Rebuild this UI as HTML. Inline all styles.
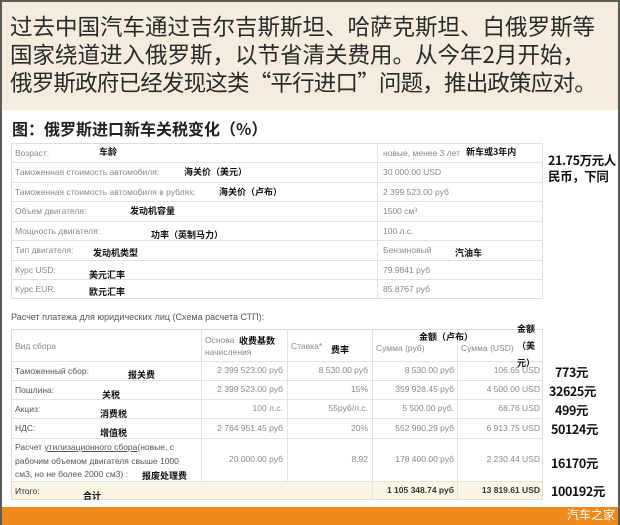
<!DOCTYPE html>
<html><head><meta charset="utf-8"><style>
*{margin:0;padding:0;box-sizing:border-box}
body{width:620px;height:525px;overflow:hidden;background:#fff;font-family:"Liberation Sans","Noto Sans CJK SC",sans-serif;position:relative}
.frame{position:absolute;left:0;top:0;width:620px;height:525px;border:2px solid #5a5a5a;border-bottom:none;pointer-events:none;z-index:5}
.top{position:absolute;left:0;top:0;width:620px;height:110px;background:#f3ecdf}
.top p{position:absolute;left:10px;font-size:22.5px;color:#2a2a2a;letter-spacing:0;white-space:nowrap;font-family:"Noto Sans CJK SC",sans-serif;line-height:28px}
.title{position:absolute;left:12px;top:116px;font-size:16px;font-weight:bold;color:#222;font-family:"Noto Sans CJK SC",sans-serif}
.a{position:absolute;font-size:8.5px;color:#888;white-space:nowrap}
.b{position:absolute;font-size:9px;font-weight:bold;color:#111;white-space:nowrap;font-family:"Noto Sans CJK SC",sans-serif;line-height:12px}
.r{position:absolute;font-size:12.5px;letter-spacing:-0.4px;font-weight:bold;color:#111;white-space:nowrap;font-family:"Noto Sans CJK SC",sans-serif;line-height:16px}
.vl{position:absolute;width:1px;background:#e2e2e2}
.hl{position:absolute;height:1px;background:#e2e2e2}
.bar{position:absolute;left:0;top:507px;width:620px;height:18px;background:#f08a1e}
.num{position:absolute;text-align:right;font-size:8.5px;color:#888;line-height:19.2px;white-space:nowrap}
</style></head><body>
<div class="top">
<p style="top:12px">过去中国汽车通过吉尔吉斯斯坦、哈萨克斯坦、白俄罗斯等</p>
<p style="top:40px">国家绕道进入俄罗斯，以节省清关费用。从今年2月开始，</p>
<p style="top:68px;letter-spacing:-0.8px">俄罗斯政府已经发现这类“平行进口”问题，推出政策应对。</p>
</div>
<div class="title">图：俄罗斯进口新车关税变化（%）</div>

<div style="position:absolute;left:11px;top:143px;width:532px;height:156px;border:1px solid #ddd"></div>
<div class="hl" style="left:11px;width:532px;top:162px"></div><div class="hl" style="left:11px;width:532px;top:182px"></div><div class="hl" style="left:11px;width:532px;top:201px"></div><div class="hl" style="left:11px;width:532px;top:221px"></div><div class="hl" style="left:11px;width:532px;top:240px"></div><div class="hl" style="left:11px;width:532px;top:260px"></div><div class="hl" style="left:11px;width:532px;top:279px"></div>
<div class="vl" style="left:377px;top:143px;height:156px"></div>

<div class="a" style="left:15px;top:148px">Возраст:</div><div class="b" style="left:99px;top:146px">车龄</div>
<div class="a" style="left:383px;top:148px">новые, менее 3 лет</div><div class="b" style="left:466px;top:146px">新车或3年内</div>
<div class="a" style="left:15px;top:167px">Таможенная стоимость автомобиля:</div><div class="b" style="left:184px;top:166px">海关价（美元）</div>
<div class="a" style="left:383px;top:167px">30 000.00 USD</div>
<div class="a" style="left:15px;top:187px">Таможенная стоимость автомобиля в рублях:</div><div class="b" style="left:219px;top:186px">海关价（卢布）</div>
<div class="a" style="left:383px;top:187px">2 399 523.00 руб</div>
<div class="a" style="left:15px;top:206px">Объем двигателя:</div><div class="b" style="left:130px;top:205px">发动机容量</div>
<div class="a" style="left:383px;top:206px">1500 см³</div>
<div class="a" style="left:15px;top:226px">Мощность двигателя:</div><div class="b" style="left:151px;top:229px">功率（英制马力）</div>
<div class="a" style="left:383px;top:226px">100 л.с.</div>
<div class="a" style="left:15px;top:245px">Тип двигателя:</div><div class="b" style="left:93px;top:247px">发动机类型</div>
<div class="a" style="left:383px;top:245px">Бензиновый</div><div class="b" style="left:455px;top:247px">汽油车</div>
<div class="a" style="left:15px;top:265px">Курс USD:</div><div class="b" style="left:89px;top:269px">美元汇率</div>
<div class="a" style="left:383px;top:265px">79.9841 руб</div>
<div class="a" style="left:15px;top:284px">Курс EUR:</div><div class="b" style="left:89px;top:286px">欧元汇率</div>
<div class="a" style="left:383px;top:284px">85.8767 руб</div>
<div class="r" style="left:548px;top:152px">21.75万元人<br>民币，下同</div>

<div class="a" style="left:11px;top:312px;color:#555;font-size:9px">Расчет платежа для юридических лиц (Схема расчета СТП):</div>
<div style="position:absolute;left:11px;top:329px;width:532px;height:171px;border:1px solid #ddd"></div>
<div style="position:absolute;left:12px;top:481px;width:530px;height:18px;background:#fbf6e4"></div>
<div class="hl" style="left:11px;width:532px;top:361px"></div><div class="hl" style="left:11px;width:532px;top:380px"></div><div class="hl" style="left:11px;width:532px;top:399px"></div><div class="hl" style="left:11px;width:532px;top:418px"></div><div class="hl" style="left:11px;width:532px;top:438px"></div><div class="hl" style="left:11px;width:532px;top:481px"></div>
<div class="vl" style="left:201px;top:329px;height:152px"></div><div class="vl" style="left:287px;top:329px;height:152px"></div><div class="vl" style="left:372px;top:329px;height:171px"></div><div class="vl" style="left:457px;top:329px;height:171px"></div>

<div class="a" style="left:15px;top:341px">Вид сбора</div>
<div class="a" style="left:205px;top:334px;line-height:12px">Основа<br>начисления</div><div class="b" style="left:239px;top:335px">收费基数</div>
<div class="a" style="left:291px;top:341px">Ставка*</div><div class="b" style="left:331px;top:344px">费率</div>
<div class="a" style="left:376px;top:343px">Сумма (руб)</div><div class="b" style="left:419px;top:331px">金额（卢布）</div>
<div class="a" style="left:461px;top:343px">Сумма (USD)</div><div class="b" style="left:517px;top:320px;line-height:17px;text-align:center">金额<br>（美<br>元）</div>

<div class="a" style="left:15px;top:366px;color:#555">Таможенный сбор:</div><div class="b" style="left:128px;top:369px">报关费</div>
<div class="a" style="left:15px;top:385px;color:#555">Пошлина:</div><div class="b" style="left:102px;top:389px">关税</div>
<div class="a" style="left:15px;top:404px;color:#555">Акциз:</div><div class="b" style="left:100px;top:408px">消费税</div>
<div class="a" style="left:15px;top:423px;color:#555">НДС:</div><div class="b" style="left:100px;top:427px">增值税</div>
<div class="a" style="left:15px;top:441px;color:#555;line-height:13.5px">Расчет <u>утилизационного сбора</u>(новые, с<br>рабочим объемом двигателя свыше 1000<br>см3, но не более 2000 см3) :</div><div class="b" style="left:142px;top:470px">报废处理费</div>
<div class="a" style="left:15px;top:486px;color:#333">Итого:</div><div class="b" style="left:83px;top:490px">合计</div>

<div class="num" style="left:202px;top:361px;width:81px">2 399 523.00 руб<br>2 399 523.00 руб<br>100 л.с.<br>2 764 951.45 руб</div>
<div class="num" style="left:288px;top:361px;width:80px">8 530.00 руб<br>15%<br>55руб/л.с.<br>20%</div>
<div class="num" style="left:373px;top:361px;width:81px">8 530.00 руб<br>359 928.45 руб<br>5 500.00 руб.<br>552 990.29 руб</div>
<div class="num" style="left:458px;top:361px;width:82px">106.65 USD<br>4 500.00 USD<br>68.76 USD<br>6 913.75 USD</div>
<div class="num" style="left:202px;top:450px;width:81px">20 000.00 руб</div>
<div class="num" style="left:288px;top:450px;width:80px">8.92</div>
<div class="num" style="left:373px;top:450px;width:81px">178 400.00 руб</div>
<div class="num" style="left:458px;top:450px;width:82px">2 230.44 USD</div>
<div class="num" style="left:373px;top:481px;width:81px;color:#333;font-weight:bold">1 105 348.74 руб</div>
<div class="num" style="left:458px;top:481px;width:82px;color:#333;font-weight:bold">13 819.61 USD</div>

<div class="r" style="left:555px;top:364px">773元</div>
<div class="r" style="left:549px;top:383px">32625元</div>
<div class="r" style="left:555px;top:402px">499元</div>
<div class="r" style="left:551px;top:421px">50124元</div>
<div class="r" style="left:551px;top:455px">16170元</div>
<div class="r" style="left:551px;top:483px">100192元</div>
<div class="bar"></div>
<div style="position:absolute;left:567px;top:507px;font-size:12px;color:#fff;font-family:'Noto Sans CJK SC',sans-serif;line-height:16px">汽车之家</div>
<div class="frame"></div>
</body></html>
